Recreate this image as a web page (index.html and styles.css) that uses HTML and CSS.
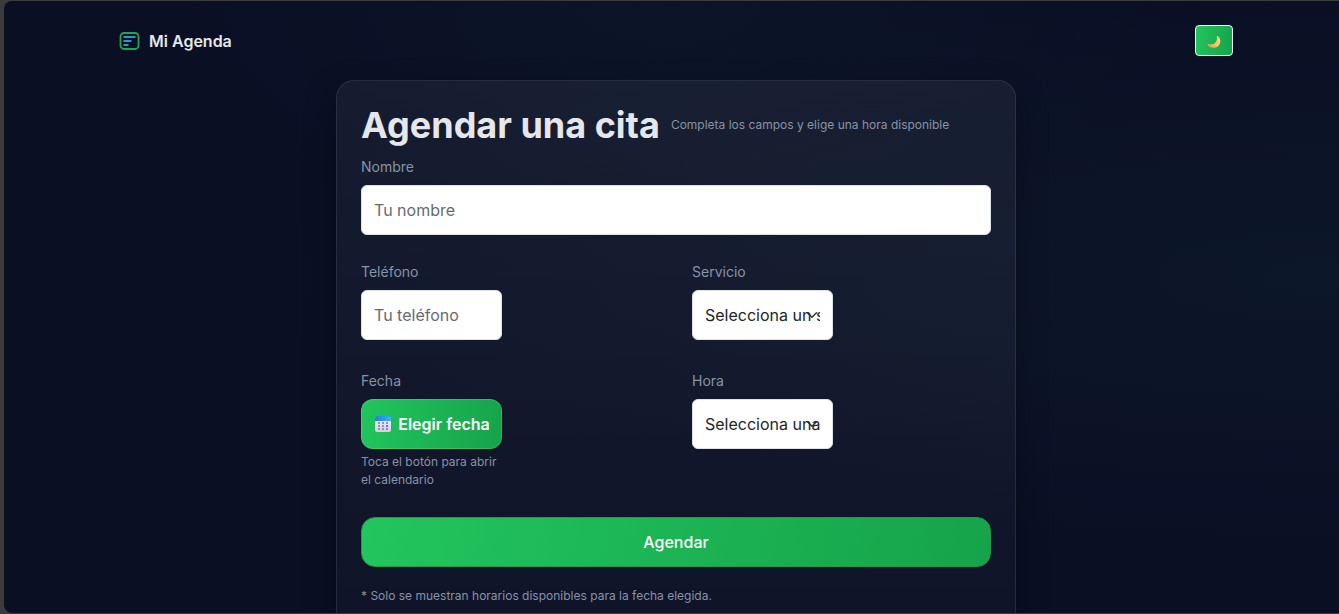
FILE: index.html
```html
<!DOCTYPE html>
<html lang="es">
<head>
<meta charset="utf-8">
<meta name="viewport" content="width=device-width, initial-scale=1">
<title>Mi Agenda</title>
<link rel="stylesheet" href="styles.css">
</head>
<body>
<div class="page">
  <header class="nav">
    <a class="brand" href="#">
      <svg class="brand-icon" viewBox="0 0 20 18" fill="none" aria-hidden="true">
        <rect x="1" y="1" width="18" height="16" rx="3.5" stroke="#1fa851" stroke-width="1.8"/>
        <path d="M4 5h12M4 9h8M4 13h5" stroke="#2f95cb" stroke-width="1.9"/>
      </svg>
      <span>Mi Agenda</span>
    </a>
    <button class="theme-toggle" type="button" aria-label="Cambiar tema">
      <svg class="moon" viewBox="0 0 14 14" aria-hidden="true">
        <defs>
          <linearGradient id="moon-fill" x1="0" y1="1" x2="1" y2="0">
            <stop offset="0" stop-color="#f28a4b"/>
            <stop offset=".5" stop-color="#ffc866"/>
            <stop offset="1" stop-color="#ffd873"/>
          </linearGradient>
        </defs>
        <path d="M10 1c.5-.3 3 1.400 3.300 4.400.4 4-2.500 7.100-6.300 7.300C3.900 12.800 1.300 11.400.6 9.900c-.3-.7.3-1 .9-.8 2.900.7 5.600.1 7.300-1.900C10.200 5.400 10.200 3.400 9.700 1.700c-.1-.3 0-.6.3-.7z" fill="url(#moon-fill)"/>
        <circle cx="10.500" cy="7.500" r=".6" fill="#eda14e"/>
        <circle cx="7.500" cy="10.500" r=".6" fill="#eda14e"/>
      </svg>
    </button>
  </header>

  <main class="card">
    <div class="heading">
      <h1>Agendar una cita</h1>
      <span class="hint">Completa los campos y elige una hora disponible</span>
    </div>
    <form class="form">
      <div class="field">
        <label for="nombre">Nombre</label>
        <input class="control" id="nombre" type="text" placeholder="Tu nombre">
      </div>
      <div class="row row-contact">
        <div class="field">
          <label for="telefono">Teléfono</label>
          <input class="control narrow" id="telefono" type="tel" placeholder="Tu teléfono">
        </div>
        <div class="field">
          <label for="servicio">Servicio</label>
          <select class="control narrow" id="servicio"><option>Selecciona un servicio</option></select>
        </div>
      </div>
      <div class="row row-date">
        <div class="field">
          <label for="fecha">Fecha</label>
          <button class="green-button date-button narrow" id="fecha" type="button">
            <svg class="calendar" viewBox="0 0 16 16" aria-hidden="true">
              <defs>
                <linearGradient id="cal-top"><stop stop-color="#2877e6"/><stop offset="1" stop-color="#35b5ff"/></linearGradient>
                <linearGradient id="cal-page" x2="0" y2="1"><stop stop-color="#f5f2fc"/><stop offset="1" stop-color="#dcc8ee"/></linearGradient>
              </defs>
              <rect y="1" width="16" height="15" rx="2" fill="url(#cal-page)"/>
              <path d="M0 5V3a3 3 0 0 1 3-3h10a3 3 0 0 1 3 3v2z" fill="url(#cal-top)"/>
              <g fill="#9990ad">
                <path d="M3 6h2v2H3zM7 6h2v2H7zM11 6h2v2h-2zM3 9h2v2H3zM7 9h2v2H7zM3 12h2v2H3zM7 12h2v2H7zM11 12h2v2h-2z"/>
              </g>
              <path d="M11 9h2v2h-2z" fill="#268ded"/>
            </svg>
            <span>Elegir fecha</span>
          </button>
          <p class="hint date-hint narrow">Toca el botón para abrir el calendario</p>
        </div>
        <div class="field">
          <label for="hora">Hora</label>
          <select class="control narrow" id="hora"><option>Selecciona una hora</option></select>
        </div>
      </div>
      <button class="green-button submit" type="submit">Agendar</button>
      <p class="hint">* Solo se muestran horarios disponibles para la fecha elegida.</p>
    </form>
  </main>
</div>
</body>
</html>
```
FILE: styles.css
```css
* { box-sizing: border-box; }

body {
  margin: 0;
  height: 100vh;
  padding: 1px 0 1px 4px;
  overflow: hidden;
  background: #3b3b3b;
  color: #e5e7eb;
  font-family: Inter, "Liberation Sans", sans-serif;
  font-size: 16px;
  line-height: 24px;
}

.page {
  height: 100%;
  padding-left: 9px;
  overflow: hidden;
  border-radius: 8px 0 0 8px;
  background:
    radial-gradient(ellipse 500px 240px at 50% 0, rgba(18, 42, 54, .22), transparent),
    radial-gradient(ellipse 1100px 280px at 100% 45%, rgba(18, 38, 52, .34), transparent),
    #0a0f24;
}

.nav {
  display: flex;
  align-items: center;
  justify-content: space-between;
  max-width: 1114px;
  height: 79px;
  margin: 0 auto;
}

.brand {
  display: flex;
  align-items: center;
  gap: 9px;
  color: #e5e7eb;
  font-weight: 600;
  text-decoration: none;
}

.brand-icon { width: 21px; height: 18px; }

.theme-toggle {
  display: flex;
  align-items: center;
  justify-content: center;
  width: 38px;
  height: 31px;
  padding: 2px 0 0;
  border: 1px solid #f8f9fa;
  border-radius: 4px;
  background: linear-gradient(100deg, #22c55e, #16a34a);
}

.moon { width: 14px; height: 14px; }

.card {
  max-width: 680px;
  margin: 0 auto;
  padding: 24px;
  border: 1px solid rgba(255, 255, 255, .09);
  border-radius: 18px;
  background: linear-gradient(180deg, rgba(255, 255, 255, .05), rgba(255, 255, 255, .025));
  box-shadow: 0 10px 30px rgba(0, 0, 0, .35);
}

.heading {
  display: flex;
  align-items: center;
  gap: 11px;
}

h1 {
  margin: 0;
  font-size: 36px;
  font-weight: 700;
  line-height: 40px;
}

.hint {
  margin: 0;
  color: #8793a6;
  font-size: 12px;
  line-height: 18px;
}

.form { margin-top: 12px; }

.row {
  display: grid;
  grid-template-columns: 1fr 1fr;
  gap: 32px;
}

.row-contact { margin-top: 27px; }
.row-date { margin-top: 31px; }

label {
  display: block;
  margin-bottom: 8px;
  color: #8793a6;
  font-size: 14px;
  line-height: 20px;
}

.control {
  display: block;
  width: 100%;
  height: 50px;
  padding: 0 12px;
  border: 1px solid #dee2e6;
  border-radius: 6px;
  background-color: #fff;
  color: #212529;
  font: inherit;
}

.control::placeholder { color: #666a6e; opacity: 1; }

select.control {
  appearance: none;
  text-overflow: clip;
  background-image: url("data:image/svg+xml,%3Csvg xmlns='http://www.w3.org/2000/svg' viewBox='0 0 16 16'%3E%3Cpath fill='none' stroke='%23343a40' stroke-linecap='round' stroke-linejoin='round' stroke-width='2' d='m2 5 6 6 6-6'/%3E%3C/svg%3E");
  background-repeat: no-repeat;
  background-position: right 12px center;
  background-size: 16px 12px;
}

.narrow { width: 141px; }

.green-button {
  height: 50px;
  border: 1px solid rgba(255, 255, 255, .15);
  background: linear-gradient(100deg, #22c55e, #16a34a) border-box;
  color: #fff;
  font: inherit;
}

.date-button {
  display: flex;
  align-items: center;
  justify-content: center;
  gap: 7px;
  padding: 0 0 0 2px;
  border-radius: 12px;
  font-weight: 600;
  white-space: nowrap;
}

.calendar { width: 16px; height: 16px; }

.date-hint { margin-top: 4px; }

.submit {
  width: 100%;
  margin: 28px 0 20px;
  border-color: #1c9a50;
  border-radius: 14px;
  font-weight: 500;
}
```
